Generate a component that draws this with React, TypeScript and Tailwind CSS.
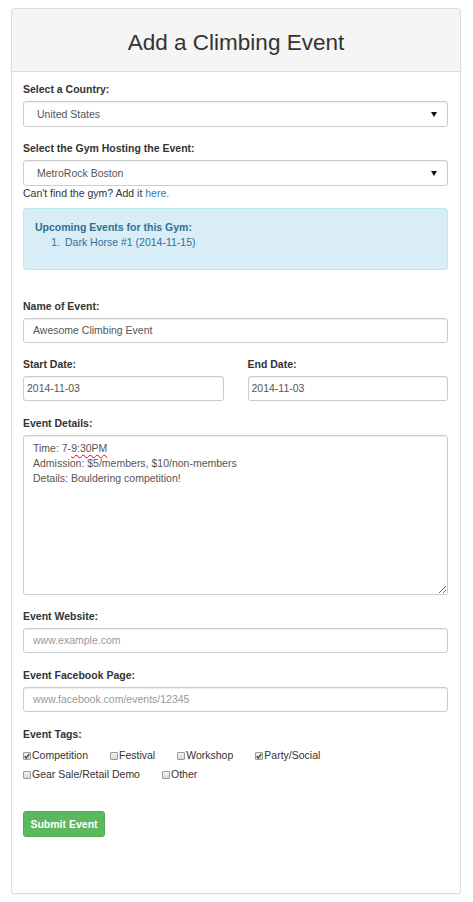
import React from "react";

const font = { fontFamily: '"Liberation Sans", Arial, sans-serif' };

function Label({ children, className = "" }: { children: React.ReactNode; className?: string }) {
  return (
    <div className={`h-[15px] leading-[15px] font-bold text-[#333] mb-[4px] ${className}`}>{children}</div>
  );
}

function SelectBox({ value, className = "" }: { value: string; className?: string }) {
  return (
    <div
      className={`h-[26px] border border-[#ccc] rounded-[3px] bg-white flex items-center pl-[13px] pr-[8px] text-[#555] shadow-[inset_0_1px_1px_rgba(0,0,0,0.075)] ${className}`}
    >
      <span className="flex-1">{value}</span>
      <svg width="6" height="5" viewBox="0 0 6 5" className="mr-[2px]">
        <path d="M0 0 L6 0 L3 5 Z" fill="#111" />
      </svg>
    </div>
  );
}

function TextInput({ value, placeholder, pl = "pl-[9px]" }: { value?: string; placeholder?: string; pl?: string }) {
  return (
    <div
      className={`h-[25px] border border-[#ccc] rounded-[3px] bg-white flex items-center ${pl} shadow-[inset_0_1px_1px_rgba(0,0,0,0.075)]`}
    >
      {value ? <span className="text-[#555]">{value}</span> : <span className="text-[#999]">{placeholder}</span>}
    </div>
  );
}

function Check({ checked, label }: { checked?: boolean; label: string }) {
  return (
    <span className="inline-flex items-center mr-[22px]">
      <span className="w-[8px] h-[8px] border border-[#9a9a9a] rounded-[1px] bg-gradient-to-b from-[#f4f4f4] to-[#d8d8d8] flex items-center justify-center">
        {checked && (
          <svg width="6" height="6" viewBox="0 0 6 6">
            <path d="M0.6 3.2 L2.3 4.9 L5.4 0.8" stroke="#444" strokeWidth="1.3" fill="none" />
          </svg>
        )}
      </span>
      <span className="ml-[1px] text-[#333]">{label}</span>
    </span>
  );
}

export default function App() {
  return (
    <div className="bg-white min-h-[902px] pt-[8px]" style={font}>
      <div className="ml-[11px] w-[450px] border border-[#ddd] rounded-[3px] bg-white text-[10.5px] leading-[15px] shadow-[0_1px_1px_rgba(0,0,0,0.05)]">
        <div className="h-[63px] bg-[#f5f5f5] border-b border-[#ddd] rounded-t-[3px] flex items-center justify-center">
          <h2 className="text-[22.5px] leading-[25px] text-[#333] font-normal pt-[4px]">Add a Climbing Event</h2>
        </div>
        <div className="pl-[11px] pr-[12px] pt-[10px] pb-[56px]">
          <Label>Select a Country:</Label>
          <SelectBox value="United States" />

          <Label className="mt-[14px]">Select the Gym Hosting the Event:</Label>
          <SelectBox value="MetroRock Boston" />
          <div className="h-[15px] leading-[15px] text-[#333]">
            Can't find the gym? Add it <a className="text-[#337ab7]">here.</a>
          </div>

          <div className="mt-[7px] h-[62px] border border-[#bce8f1] bg-[#d9edf7] rounded-[3px] pt-[11px] pl-[11px] text-[#31708f]">
            <div className="font-bold leading-[15px]">Upcoming Events for this Gym:</div>
            <div className="leading-[15px] flex">
              <span className="w-[30px] text-right pr-[5px]">1.</span>
              <span>Dark Horse #1 (2014-11-15)</span>
            </div>
          </div>

          <Label className="mt-[29px]">Name of Event:</Label>
          <TextInput value="Awesome Climbing Event" />

          <div className="grid grid-cols-2 gap-x-[24px] mt-[14px]">
            <div>
              <Label>Start Date:</Label>
              <TextInput value="2014-11-03" pl="pl-[3px]" />
            </div>
            <div>
              <Label>End Date:</Label>
              <TextInput value="2014-11-03" pl="pl-[3px]" />
            </div>
          </div>

          <Label className="mt-[15px]">Event Details:</Label>
          <div className="h-[160px] border border-[#ccc] rounded-[3px] bg-white pl-[9px] pt-[5px] text-[#555] resize overflow-auto shadow-[inset_0_1px_1px_rgba(0,0,0,0.075)]">
            <div>
              Time: 7-<span className="underline decoration-wavy decoration-[#e00] decoration-[1px] underline-offset-[2px]">9:30PM</span>
            </div>
            <div>Admission: $5/members, $10/non-members</div>
            <div>Details: Bouldering competition!</div>
          </div>

          <Label className="mt-[14px]">Event Website:</Label>
          <TextInput placeholder="www.example.com" />

          <Label className="mt-[15px]">Event Facebook Page:</Label>
          <TextInput placeholder="www.facebook.com/events/12345" />

          <Label className="mt-[15px] mb-[0px]">Event Tags:</Label>
          <div className="h-[19px] flex items-center">
            <Check checked label="Competition" />
            <Check label="Festival" />
            <Check label="Workshop" />
            <Check checked label="Party/Social" />
          </div>
          <div className="h-[19px] flex items-center">
            <Check label="Gear Sale/Retail Demo" />
            <Check label="Other" />
          </div>

          <button className="mt-[27px] h-[26px] w-[82px] bg-[#5cb85c] border border-[#4cae4c] rounded-[3px] text-white font-bold text-[10.5px]">
            Submit Event
          </button>
        </div>
      </div>
    </div>
  );
}
